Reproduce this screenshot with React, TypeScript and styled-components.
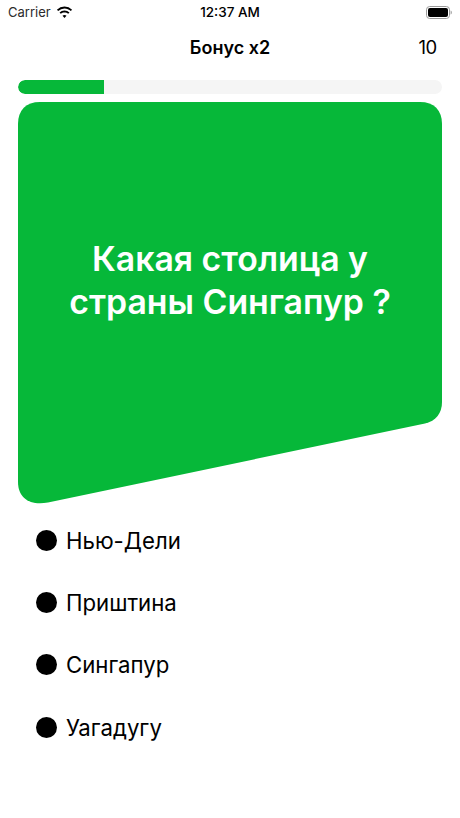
import React from "react";
import styled, { createGlobalStyle } from "styled-components";

const GlobalStyle = createGlobalStyle`
  html, body {
    margin: 0;
    padding: 0;
    background: #fff;
    font-family: Inter, "Liberation Sans", sans-serif;
    color: #000;
  }
`;

const Screen = styled.div`
  width: 460px;
  height: 818px;
  overflow: hidden;
  display: flex;
  flex-direction: column;
`;

const StatusBar = styled.div`
  height: 24px;
  padding: 0 8px;
  display: grid;
  grid-template-columns: 1fr auto 1fr;
  align-items: center;
  font-size: 13px;
`;

const Carrier = styled.div`
  display: flex;
  align-items: center;
  gap: 5px;
  color: #2b2b2b;
`;

const Time = styled.div`
  font-weight: 500;
  font-size: 13.5px;
`;

const Battery = styled.div`
  justify-self: end;
  display: flex;
  align-items: center;
`;

const Header = styled.div`
  height: 46px;
  padding: 0 23px;
  display: grid;
  grid-template-columns: 1fr auto 1fr;
  align-items: center;
`;

const Title = styled.div`
  font-size: 18px;
  font-weight: 600;
`;

const Score = styled.div`
  justify-self: end;
  font-size: 18.5px;
  letter-spacing: -0.3px;
`;

const Track = styled.div`
  margin: 10px 18px 0;
  height: 14px;
  border-radius: 7px;
  background: #f5f5f5;
  overflow: hidden;
`;

const Fill = styled.div<{ $percent: number }>`
  width: ${({ $percent }) => $percent}%;
  height: 100%;
  background: #06b839;
  border-radius: 7px 0 0 7px;
`;

const QuestionCard = styled.div`
  margin: 8px 18px 0;
  width: 424px;
  height: 402px;
  background: #06b839;
  clip-path: path("M22 0 H402 C416 0 424 8 424 22 V300 C424 311 418 319 407 321.5 L30 400.5 C12 404 0 396 0 380 V22 C0 8 8 0 22 0 Z");
  display: flex;
  justify-content: center;
  box-sizing: border-box;
  padding-top: 135px;
`;

const Question = styled.div`
  width: 350px;
  color: #fff;
  font-size: 33.8px;
  line-height: 43px;
  font-weight: 600;
  text-align: center;
`;

const Options = styled.div`
  margin-top: 19px;
  padding-left: 36px;
  display: flex;
  flex-direction: column;
  gap: 27.2px;
`;

const Option = styled.div`
  height: 35px;
  display: flex;
  align-items: center;
  gap: 9px;
  font-size: 22.2px;
`;

const Dot = styled.span`
  width: 21px;
  height: 21px;
  border-radius: 50%;
  background: #000;
`;

const answers = ["Нью-Дели", "Приштина", "Сингапур", "Уагадугу"];

const WifiIcon = () => (
  <svg width="17" height="13" viewBox="0 0 17 13">
    <path d="M8.5 2.6c2.4 0 4.6.9 6.3 2.5l1.3-1.4A11 11 0 0 0 8.5.6 11 11 0 0 0 .9 3.7l1.3 1.4a9.1 9.1 0 0 1 6.3-2.5z" fill="#000" />
    <path d="M8.5 6.4c1.4 0 2.7.5 3.7 1.4l1.3-1.4a7.4 7.4 0 0 0-10 0l1.3 1.4c1-.9 2.3-1.4 3.7-1.4z" fill="#000" />
    <path d="M8.5 9c-.8 0-1.4.3-2 .8l2 2.2 2-2.2c-.6-.5-1.2-.8-2-.8z" fill="#000" />
  </svg>
);

const BatteryIcon = () => (
  <svg width="26" height="13" viewBox="0 0 26 13">
    <rect x="0.5" y="0.5" width="23" height="12" rx="3.2" fill="none" stroke="#9a9a9a" />
    <rect x="2" y="2" width="20" height="9" rx="2" fill="#000" />
    <path d="M24.6 4.5c.8.3 1.2 1 1.2 2s-.4 1.7-1.2 2z" fill="#9a9a9a" />
  </svg>
);

const App: React.FC = () => {
  return (
    <Screen>
      <GlobalStyle />
      <StatusBar>
        <Carrier>
          Carrier
          <WifiIcon />
        </Carrier>
        <Time>12:37 AM</Time>
        <Battery>
          <BatteryIcon />
        </Battery>
      </StatusBar>
      <Header>
        <span />
        <Title>Бонус x2</Title>
        <Score>10</Score>
      </Header>
      <Track>
        <Fill $percent={20.2} />
      </Track>
      <QuestionCard>
        <Question>Какая столица у страны Сингапур ?</Question>
      </QuestionCard>
      <Options>
        {answers.map((answer) => (
          <Option key={answer}>
            <Dot />
            {answer}
          </Option>
        ))}
      </Options>
    </Screen>
  );
};

export default App;
